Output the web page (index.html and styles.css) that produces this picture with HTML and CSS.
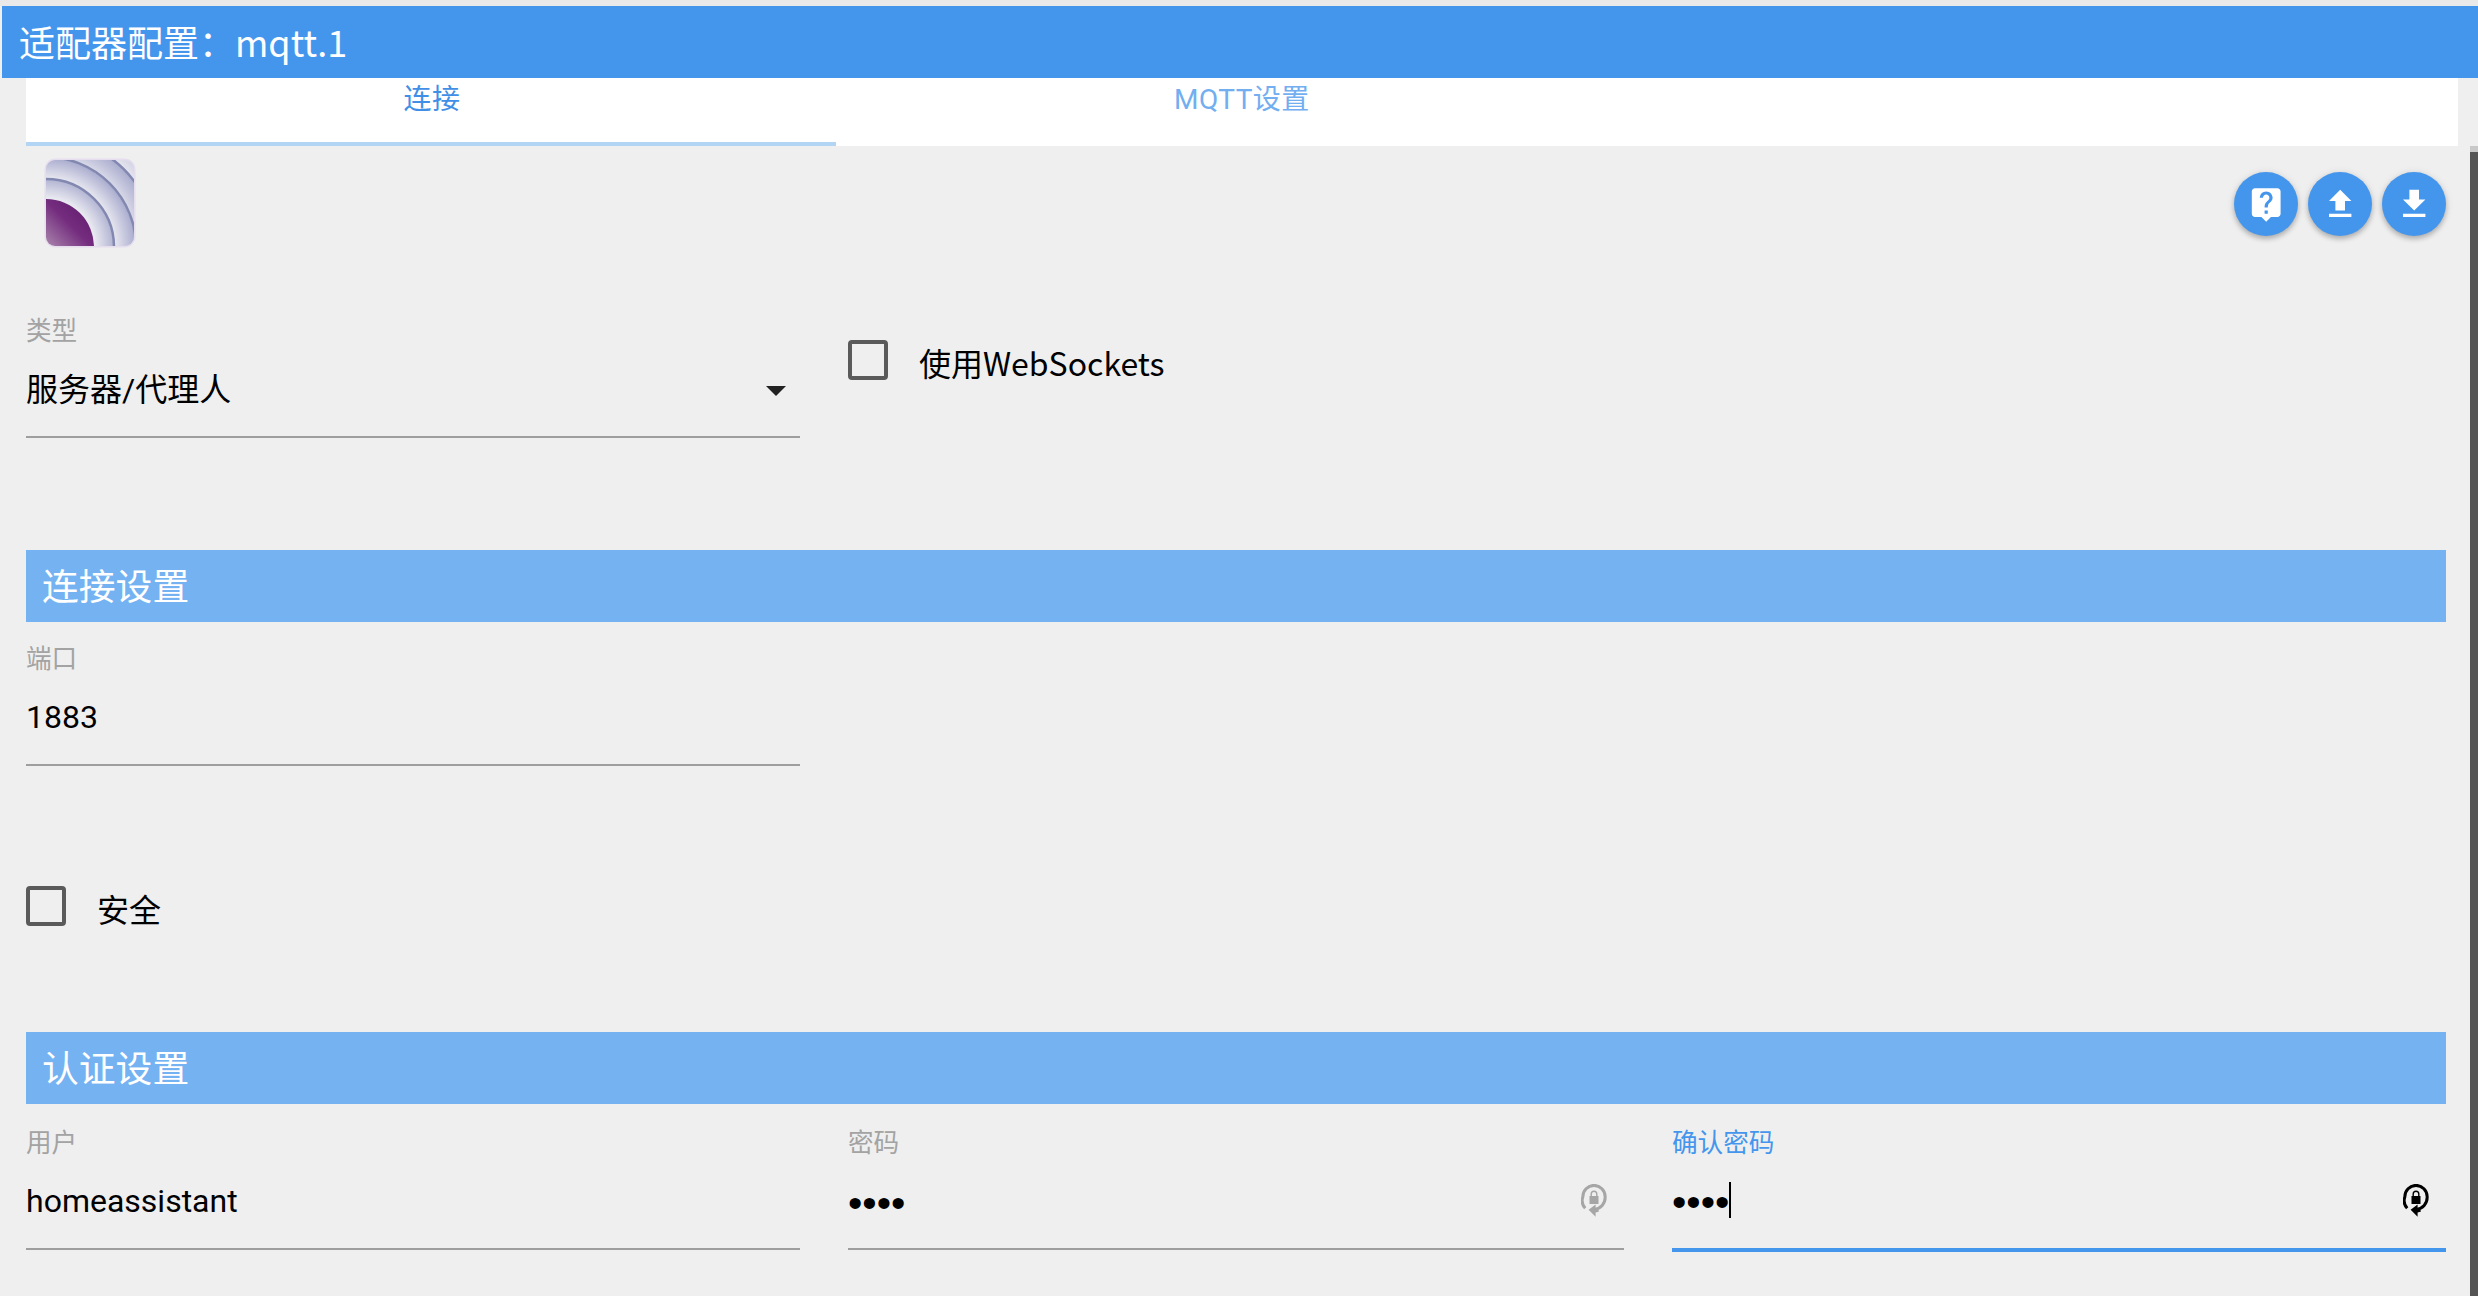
FILE: index.html
```html
<!DOCTYPE html>
<html lang="zh">
<head>
<meta charset="utf-8">
<title>适配器配置：mqtt.1</title>
<link rel="stylesheet" href="styles.css">
</head>
<body>
<header class="title-bar">适配器配置：mqtt.1</header>
<nav class="tabs">
  <div class="tab tab-active">连接</div>
  <div class="tab">MQTT设置</div>
</nav>
<div class="scrollbar"></div>
<main class="content">
  <div class="toolbar">
    <svg class="logo" viewBox="0 0 92 90" aria-hidden="true">
      <defs>
        <clipPath id="logoClip"><rect x="2" y="2" width="88" height="86" rx="9"/></clipPath>
        <radialGradient id="band" gradientUnits="userSpaceOnUse" cx="2" cy="89" r="130">
          <stop offset="0.38" stop-color="#e8e8f0"/>
          <stop offset="0.52" stop-color="#b3b5d3"/>
          <stop offset="0.53" stop-color="#e6e6ef"/>
          <stop offset="0.68" stop-color="#adafd0"/>
          <stop offset="0.69" stop-color="#d9dae8"/>
          <stop offset="0.84" stop-color="#abadcf"/>
          <stop offset="0.85" stop-color="#e6e6f0"/>
          <stop offset="1" stop-color="#c0c1da"/>
        </radialGradient>
        <linearGradient id="plum" gradientUnits="userSpaceOnUse" x1="2" y1="88" x2="40" y2="50">
          <stop offset="0" stop-color="#aa85ad"/>
          <stop offset="0.6" stop-color="#742c7e"/>
          <stop offset="1" stop-color="#662070"/>
        </linearGradient>
      </defs>
      <rect x="0.5" y="0.5" width="91" height="89" rx="11" fill="#e6deee"/>
      <g clip-path="url(#logoClip)">
        <rect width="92" height="90" fill="url(#band)"/>
        <circle cx="2" cy="89" r="68" fill="none" stroke="#8288b0" stroke-width="2.5"/>
        <circle cx="2" cy="89" r="90" fill="none" stroke="#8288b0" stroke-width="2.5"/>
        <circle cx="2" cy="89" r="110" fill="none" stroke="#8288b0" stroke-width="2.5"/>
        <circle cx="2" cy="89" r="48" fill="url(#plum)"/>
      </g>
    </svg>
    <div class="actions">
      <button class="fab" type="button" aria-label="help"><svg viewBox="0 0 24 24"><path d="M19 2H5c-1.11 0-2 .9-2 2v14c0 1.1.89 2 2 2h4l3 3 3-3h4c1.1 0 2-.9 2-2V4c0-1.1-.9-2-2-2zm-6 16h-2v-2h2v2zm2.07-7.75l-.9.92C13.45 11.9 13 12.5 13 14h-2v-.5c0-1.1.45-2.1 1.17-2.83l1.24-1.26c.37-.36.59-.86.59-1.41 0-1.1-.9-2-2-2s-2 .9-2 2H8c0-2.21 1.79-4 4-4s4 1.79 4 4c0 .88-.36 1.68-.93 2.25z"/></svg></button>
      <button class="fab" type="button" aria-label="upload"><svg viewBox="0 0 24 24"><path d="M9 16h6v-6h4l-7-7-7 7h4zm-4 2h14v2H5z"/></svg></button>
      <button class="fab" type="button" aria-label="download"><svg viewBox="0 0 24 24"><path d="M19 9h-4V3H9v6H5l7 7 7-7zM5 18v2h14v-2H5z"/></svg></button>
    </div>
  </div>

  <div class="row row-type">
    <div class="field">
      <div class="label">类型</div>
      <div class="value value-select">服务器/代理人<span class="arrow"></span></div>
    </div>
    <label class="check check-ws"><span class="box"></span>使用WebSockets</label>
  </div>

  <h2 class="section">连接设置</h2>
  <div class="row">
    <div class="field">
      <div class="label">端口</div>
      <div class="value">1883</div>
    </div>
  </div>

  <label class="check check-secure"><span class="box"></span>安全</label>

  <h2 class="section section-auth">认证设置</h2>
  <div class="row row-auth">
    <div class="field">
      <div class="label">用户</div>
      <div class="value">homeassistant</div>
    </div>
    <div class="field">
      <div class="label">密码</div>
      <div class="value"><span class="dots">••••</span>
        <svg class="lock lock-idle" viewBox="0 0 26 34"><path class="ring" d="M4.2 24.2A11.2 11.2 0 0 1 1.8 13 11.2 11.6 0 0 1 24.2 13c0 6.7-4.4 11.6-11 12.4"/><path class="fill" d="M14.6 20.6 7.6 25.8l7 7v-4.4c1.3-.2 2.4-.5 3.4-1l-1.2-3a9 9 0 0 1-2.2.6z"/><path class="fill" d="M8.5 12h1v-2a3.5 3.5 0 0 1 7 0v2h1v8h-9zm2.4 0h4.2v-2a2.1 2.1 0 0 0-4.2 0z"/></svg>
      </div>
    </div>
    <div class="field field-focus">
      <div class="label">确认密码</div>
      <div class="value"><span class="dots">••••</span><span class="caret"></span>
        <svg class="lock" viewBox="0 0 26 34"><path class="ring" d="M4.2 24.2A11.2 11.2 0 0 1 1.8 13 11.2 11.6 0 0 1 24.2 13c0 6.7-4.4 11.6-11 12.4"/><path class="fill" d="M14.6 20.6 7.6 25.8l7 7v-4.4c1.3-.2 2.4-.5 3.4-1l-1.2-3a9 9 0 0 1-2.2.6z"/><path class="fill" d="M8.5 12h1v-2a3.5 3.5 0 0 1 7 0v2h1v8h-9zm2.4 0h4.2v-2a2.1 2.1 0 0 0-4.2 0z"/></svg>
      </div>
    </div>
  </div>
</main>
</body>
</html>
```
FILE: styles.css
```css
* { box-sizing: border-box; }
html, body { margin: 0; height: 1296px; overflow: hidden; }
body {
  position: relative;
  border-top: 6px solid #e9e9e9;
  background: #efefef;
  color: #000;
  font-family: Roboto, "Noto Sans CJK SC", sans-serif;
}
.title-bar {
  height: 72px;
  margin-left: 2px;
  padding-left: 17px;
  background: #4496ed;
  color: #fff;
  font-family: "Noto Sans CJK SC", sans-serif;
  font-size: 36px;
  line-height: 70px;
}
.tabs {
  display: flex;
  height: 68px;
  margin: 0 20px 0 26px;
  background: #fff;
  font-size: 28px;
  line-height: 36px;
  letter-spacing: .5px;
}
.tab {
  width: 810px;
  padding: 4px 0 0 2px;
  text-align: center;
  color: #72aef0;
}
.tab-active {
  color: #3f8fe6;
  border-bottom: 4px solid #b2d5f6;
}
.scrollbar {
  position: absolute;
  top: 140px;
  right: 0;
  width: 8px;
  height: 1150px;
  background: #555;
  border-top: 6px solid #c8c8c8;
}
.content { padding: 0 32px 0 26px; }
.toolbar {
  display: flex;
  justify-content: space-between;
  height: 150px;
  padding: 12px 0 0 18px;
}
.logo { display: block; width: 92px; height: 90px; }
.actions { display: flex; gap: 10px; padding-top: 14px; }
.fab {
  display: flex;
  align-items: center;
  justify-content: center;
  width: 64px;
  height: 64px;
  padding: 0;
  border: 0;
  border-radius: 50%;
  background: #4496ed;
  box-shadow: 0 3px 5px rgba(0,0,0,.22), 0 1px 8px rgba(0,0,0,.1);
}
.fab svg { width: 38.4px; height: 38.4px; fill: #fff; }
.row {
  display: grid;
  grid-template-columns: 774px 776px 774px;
  column-gap: 48px;
}
.row-type { height: 254px; }
.field { min-width: 0; }
.label {
  height: 24px;
  margin-top: 25px;
  color: #a3a3a3;
  font-size: 25.6px;
  line-height: 24px;
}
.row-type .label { margin-top: 23px; }
.row-auth .label { margin-top: 27px; }
.value {
  position: relative;
  display: flex;
  align-items: center;
  height: 95px;
  padding-bottom: 2px;
  border-bottom: 2px solid #9e9e9e;
  font-size: 32px;
}
.value-select { padding-bottom: 5px; }
.arrow {
  position: absolute;
  top: 43px;
  right: 14px;
  border-style: solid;
  border-width: 10px 10px 0;
  border-color: #222 transparent transparent;
}
.check {
  display: flex;
  align-items: flex-start;
  gap: 31px;
  font-family: "Noto Sans CJK SC", sans-serif;
  font-size: 32px;
  line-height: 45px;
}
.box {
  flex: none;
  width: 40px;
  height: 40px;
  border: 4px solid #5a5a5a;
  border-radius: 4px;
}
.check-ws { align-self: start; margin-top: 44px; }
.section {
  height: 72px;
  margin: 0;
  padding-left: 16px;
  background: #74b2f2;
  color: #fff;
  font-family: "Noto Sans CJK SC", sans-serif;
  font-size: 36.8px;
  font-weight: 400;
  line-height: 69px;
}
.check-secure { height: 40px; margin-top: 120px; }
.section-auth { margin-top: 106px; }
.dots { padding-top: 5px; font-family: "Liberation Sans", sans-serif; font-size: 41px; line-height: 42px; }
.lock {
  position: absolute;
  top: 29px;
  right: 17px;
  width: 26px;
  height: 34px;
}
.lock .ring { fill: none; stroke: #000; stroke-width: 3; }
.lock .fill { fill: #000; }
.lock-idle { opacity: .3; }
.caret {
  display: block;
  align-self: flex-start;
  width: 2px;
  height: 36px;
  margin-top: 27px;
  background: #000;
}
.field-focus .label { color: #4496ed; }
.field-focus .value { height: 97px; padding-bottom: 4px; border-bottom: 4px solid #4496ed; }
```
